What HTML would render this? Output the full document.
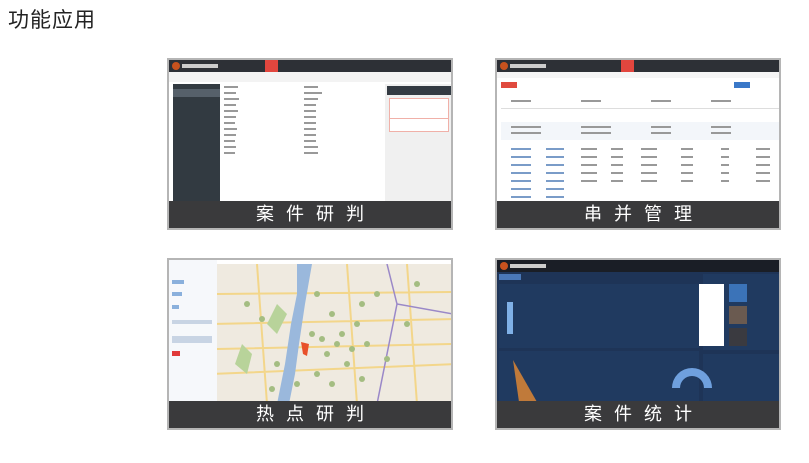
<!DOCTYPE html>
<html><head><meta charset="utf-8"><style>
*{margin:0;padding:0;box-sizing:border-box}
body{width:809px;height:463px;background:#fff;position:relative;overflow:hidden;font-family:"Liberation Sans","Noto Sans CJK SC",sans-serif}
.t{position:absolute;left:8px;top:4px;font-size:21px;color:#222;letter-spacing:1px}
.card{position:absolute;width:286px;height:172px;border:2px solid #b5b5b5;background:#fff;overflow:hidden}
.cap{position:absolute;left:0;right:0;bottom:0;height:27px;background:#3a3a3c;color:#fff;font-size:18px;text-align:center;line-height:27px;letter-spacing:12px;padding-left:12px}
.hd{position:absolute;left:0;right:0;top:0;height:12px;background:#2d3036}
.logo{position:absolute;left:3px;top:2px;width:8px;height:8px;border-radius:50%;background:#c8521e}
.red{position:absolute;top:0;width:13px;height:12px;background:#e2463e}
</style></head><body>
<div class="t">功能应用</div>

<div class="card" style="left:167px;top:58px">
<div class="hd"><div class="logo"></div><div style="position:absolute;left:13px;top:4px;width:36px;height:4px;background:#ccc"></div><div class="red" style="left:96px"></div></div>
<div style="position:absolute;left:0;top:12px;right:0;height:10px;background:#f3f3f3"></div>
<div style="position:absolute;left:4px;top:24px;width:47px;height:120px;background:#323a41"></div>
<div style="position:absolute;left:4px;top:29px;width:47px;height:8px;background:#56606a"></div>
<div style="position:absolute;left:216px;top:24px;width:68px;height:120px;background:#f0f0f0"></div>
<div style="position:absolute;left:218px;top:26px;width:66px;height:9px;background:#333a42"></div>
<div style="position:absolute;left:220px;top:38px;width:60px;height:30px;border:1px solid #f0b0a8;background:#fff"></div>
<div style="position:absolute;left:220px;top:58px;width:60px;height:14px;border:1px solid #f0b0a8;background:#fff"></div>
<svg style="position:absolute;left:55px;top:26px" width="150" height="90">
<g fill="#999">
<rect x="0" y="0" width="14" height="2"/><rect x="0" y="6" width="12" height="2"/><rect x="0" y="12" width="15" height="2"/><rect x="0" y="18" width="12" height="2"/><rect x="0" y="24" width="14" height="2"/><rect x="0" y="30" width="12" height="2"/><rect x="0" y="36" width="11" height="2"/><rect x="0" y="42" width="13" height="2"/><rect x="0" y="48" width="12" height="2"/><rect x="0" y="54" width="11" height="2"/><rect x="0" y="60" width="12" height="2"/><rect x="0" y="66" width="11" height="2"/>
<rect x="80" y="0" width="14" height="2"/><rect x="80" y="6" width="18" height="2"/><rect x="80" y="12" width="14" height="2"/><rect x="80" y="18" width="12" height="2"/><rect x="80" y="24" width="12" height="2"/><rect x="80" y="30" width="12" height="2"/><rect x="80" y="36" width="12" height="2"/><rect x="80" y="42" width="12" height="2"/><rect x="80" y="48" width="12" height="2"/><rect x="80" y="54" width="12" height="2"/><rect x="80" y="60" width="14" height="2"/><rect x="80" y="66" width="14" height="2"/>
</g></svg>
<div class="cap">案件研判</div>
</div>

<div class="card" style="left:495px;top:58px">
<div class="hd"><div class="logo"></div><div style="position:absolute;left:13px;top:4px;width:36px;height:4px;background:#ccc"></div><div class="red" style="left:124px"></div></div>
<div style="position:absolute;left:0;top:12px;right:0;height:6px;background:#f5f5f5"></div>
<div style="position:absolute;left:4px;top:22px;width:16px;height:6px;background:#e04a3e"></div>
<div style="position:absolute;left:237px;top:22px;width:16px;height:6px;background:#3a78c8"></div>
<svg style="position:absolute;left:4px;top:32px" width="278" height="110">
<rect x="0" y="16" width="278" height="1" fill="#ddd"/>
<rect x="0" y="30" width="278" height="18" fill="#f3f6fa"/>
<g fill="#7a9cc8">
<rect x="10" y="56" width="20" height="2"/><rect x="45" y="56" width="18" height="2"/><rect x="10" y="64" width="20" height="2"/><rect x="45" y="64" width="18" height="2"/><rect x="10" y="72" width="20" height="2"/><rect x="45" y="72" width="18" height="2"/><rect x="10" y="80" width="20" height="2"/><rect x="45" y="80" width="18" height="2"/><rect x="10" y="88" width="20" height="2"/><rect x="45" y="88" width="18" height="2"/><rect x="10" y="96" width="20" height="2"/><rect x="45" y="96" width="18" height="2"/><rect x="10" y="104" width="20" height="2"/><rect x="45" y="104" width="18" height="2"/>
</g>
<g fill="#999">
<rect x="80" y="56" width="16" height="2"/><rect x="110" y="56" width="12" height="2"/><rect x="140" y="56" width="16" height="2"/><rect x="180" y="56" width="12" height="2"/><rect x="220" y="56" width="8" height="2"/><rect x="255" y="56" width="14" height="2"/>
<rect x="80" y="64" width="16" height="2"/><rect x="110" y="64" width="12" height="2"/><rect x="140" y="64" width="16" height="2"/><rect x="180" y="64" width="12" height="2"/><rect x="220" y="64" width="8" height="2"/><rect x="255" y="64" width="14" height="2"/>
<rect x="80" y="72" width="16" height="2"/><rect x="110" y="72" width="12" height="2"/><rect x="140" y="72" width="16" height="2"/><rect x="180" y="72" width="12" height="2"/><rect x="220" y="72" width="8" height="2"/><rect x="255" y="72" width="14" height="2"/>
<rect x="80" y="80" width="16" height="2"/><rect x="110" y="80" width="12" height="2"/><rect x="140" y="80" width="16" height="2"/><rect x="180" y="80" width="12" height="2"/><rect x="220" y="80" width="8" height="2"/><rect x="255" y="80" width="14" height="2"/>
<rect x="80" y="88" width="16" height="2"/><rect x="110" y="88" width="12" height="2"/><rect x="140" y="88" width="16" height="2"/><rect x="180" y="88" width="12" height="2"/><rect x="220" y="88" width="8" height="2"/><rect x="255" y="88" width="14" height="2"/>
<rect x="10" y="8" width="20" height="2"/><rect x="80" y="8" width="20" height="2"/><rect x="150" y="8" width="20" height="2"/><rect x="210" y="8" width="20" height="2"/>
<rect x="10" y="34" width="30" height="2"/><rect x="80" y="34" width="30" height="2"/><rect x="150" y="34" width="20" height="2"/><rect x="210" y="34" width="20" height="2"/><rect x="10" y="40" width="30" height="2"/><rect x="80" y="40" width="30" height="2"/><rect x="150" y="40" width="20" height="2"/><rect x="210" y="40" width="20" height="2"/>
</g></svg>
<div class="cap">串并管理</div>
</div>

<div class="card" style="left:167px;top:258px">
<div style="position:absolute;left:0;top:0;width:48px;height:144px;background:#f6f8fb"></div>
<div style="position:absolute;left:3px;top:20px;width:12px;height:4px;background:#8ab0dc"></div>
<div style="position:absolute;left:3px;top:32px;width:10px;height:4px;background:#8ab0dc"></div>
<div style="position:absolute;left:3px;top:45px;width:7px;height:4px;background:#8ab0dc"></div>
<div style="position:absolute;left:3px;top:60px;width:40px;height:4px;background:#c8d4e4"></div>
<div style="position:absolute;left:3px;top:76px;width:40px;height:7px;background:#c8d4e4"></div>
<div style="position:absolute;left:3px;top:91px;width:8px;height:5px;background:#e03a3a"></div>
<svg style="position:absolute;left:48px;top:4px" width="236" height="140">
<rect width="236" height="140" fill="#efeae0"/>
<path d="M-5 60 L240 55 M-5 110 L240 100 M40 0 L50 140 M130 0 L140 140 M190 0 L200 140 M-5 30 L240 28 M0 85 L236 80" stroke="#f3d68a" stroke-width="2" fill="none"/>
<path d="M80 0 L95 0 L88 40 L82 80 L78 110 L72 140 L60 140 L68 100 L74 60 L80 30 Z" fill="#9ab8dc"/>
<path d="M60 40 L70 50 L60 70 L50 60Z M25 80 L35 90 L30 110 L18 100Z" fill="#b8d39a"/>
<path d="M170 0 L180 40 L236 50 M180 40 L160 140" stroke="#9a88c8" stroke-width="1.5" fill="none"/>
<g fill="#a4bd82">
<circle cx="30" cy="40" r="3"/><circle cx="45" cy="55" r="3"/><circle cx="100" cy="30" r="3"/><circle cx="115" cy="50" r="3"/><circle cx="125" cy="70" r="3"/><circle cx="140" cy="60" r="3"/><circle cx="150" cy="80" r="3"/><circle cx="110" cy="90" r="3"/><circle cx="130" cy="100" r="3"/><circle cx="100" cy="110" r="3"/><circle cx="145" cy="40" r="3"/><circle cx="160" cy="30" r="3"/><circle cx="170" cy="95" r="3"/><circle cx="95" cy="70" r="3"/><circle cx="105" cy="75" r="3"/><circle cx="120" cy="80" r="3"/><circle cx="135" cy="85" r="3"/><circle cx="60" cy="100" r="3"/><circle cx="190" cy="60" r="3"/><circle cx="200" cy="20" r="3"/><circle cx="80" cy="120" r="3"/><circle cx="115" cy="120" r="3"/><circle cx="55" cy="125" r="3"/><circle cx="145" cy="115" r="3"/>
</g>
<path d="M84 78 L92 80 L90 92 L86 90 Z" fill="#e8502a"/>
</svg>
<div class="cap">热点研判</div>
</div>

<div class="card" style="left:495px;top:258px;background:#1e3457">
<div class="hd" style="background:#1a1e26"><div class="logo"></div><div style="position:absolute;left:13px;top:4px;width:36px;height:4px;background:#ccc"></div></div>
<div style="position:absolute;left:2px;top:14px;width:22px;height:6px;background:#4a78b8"></div>
<div style="position:absolute;left:2px;top:24px;width:200px;height:64px;background:#203a60"></div>
<div style="position:absolute;left:2px;top:91px;width:200px;height:53px;background:#203a60"></div>
<div style="position:absolute;left:206px;top:14px;width:78px;height:76px;background:#203a60"></div>
<div style="position:absolute;left:206px;top:94px;width:78px;height:50px;background:#203a60"></div>
<div style="position:absolute;left:10px;top:42px;width:6px;height:32px;background:#7fb0e6"></div>
<div style="position:absolute;left:202px;top:24px;width:25px;height:62px;background:#fff"></div>
<div style="position:absolute;left:232px;top:24px;width:18px;height:18px;background:#3b73b8"></div>
<div style="position:absolute;left:232px;top:46px;width:18px;height:18px;background:#6a5a50"></div>
<div style="position:absolute;left:232px;top:68px;width:18px;height:18px;background:#3a3a40"></div>
<svg style="position:absolute;left:0;top:0" width="286" height="144">
<path d="M16 100 L22 142 L40 142 Z" fill="#c07a3a"/>
<path d="M175 128 A20 20 0 0 1 215 128 L207 128 A12 12 0 0 0 183 128 Z" fill="#6fa0de"/>
</svg>
<div class="cap">案件统计</div>
</div>
</body></html>
